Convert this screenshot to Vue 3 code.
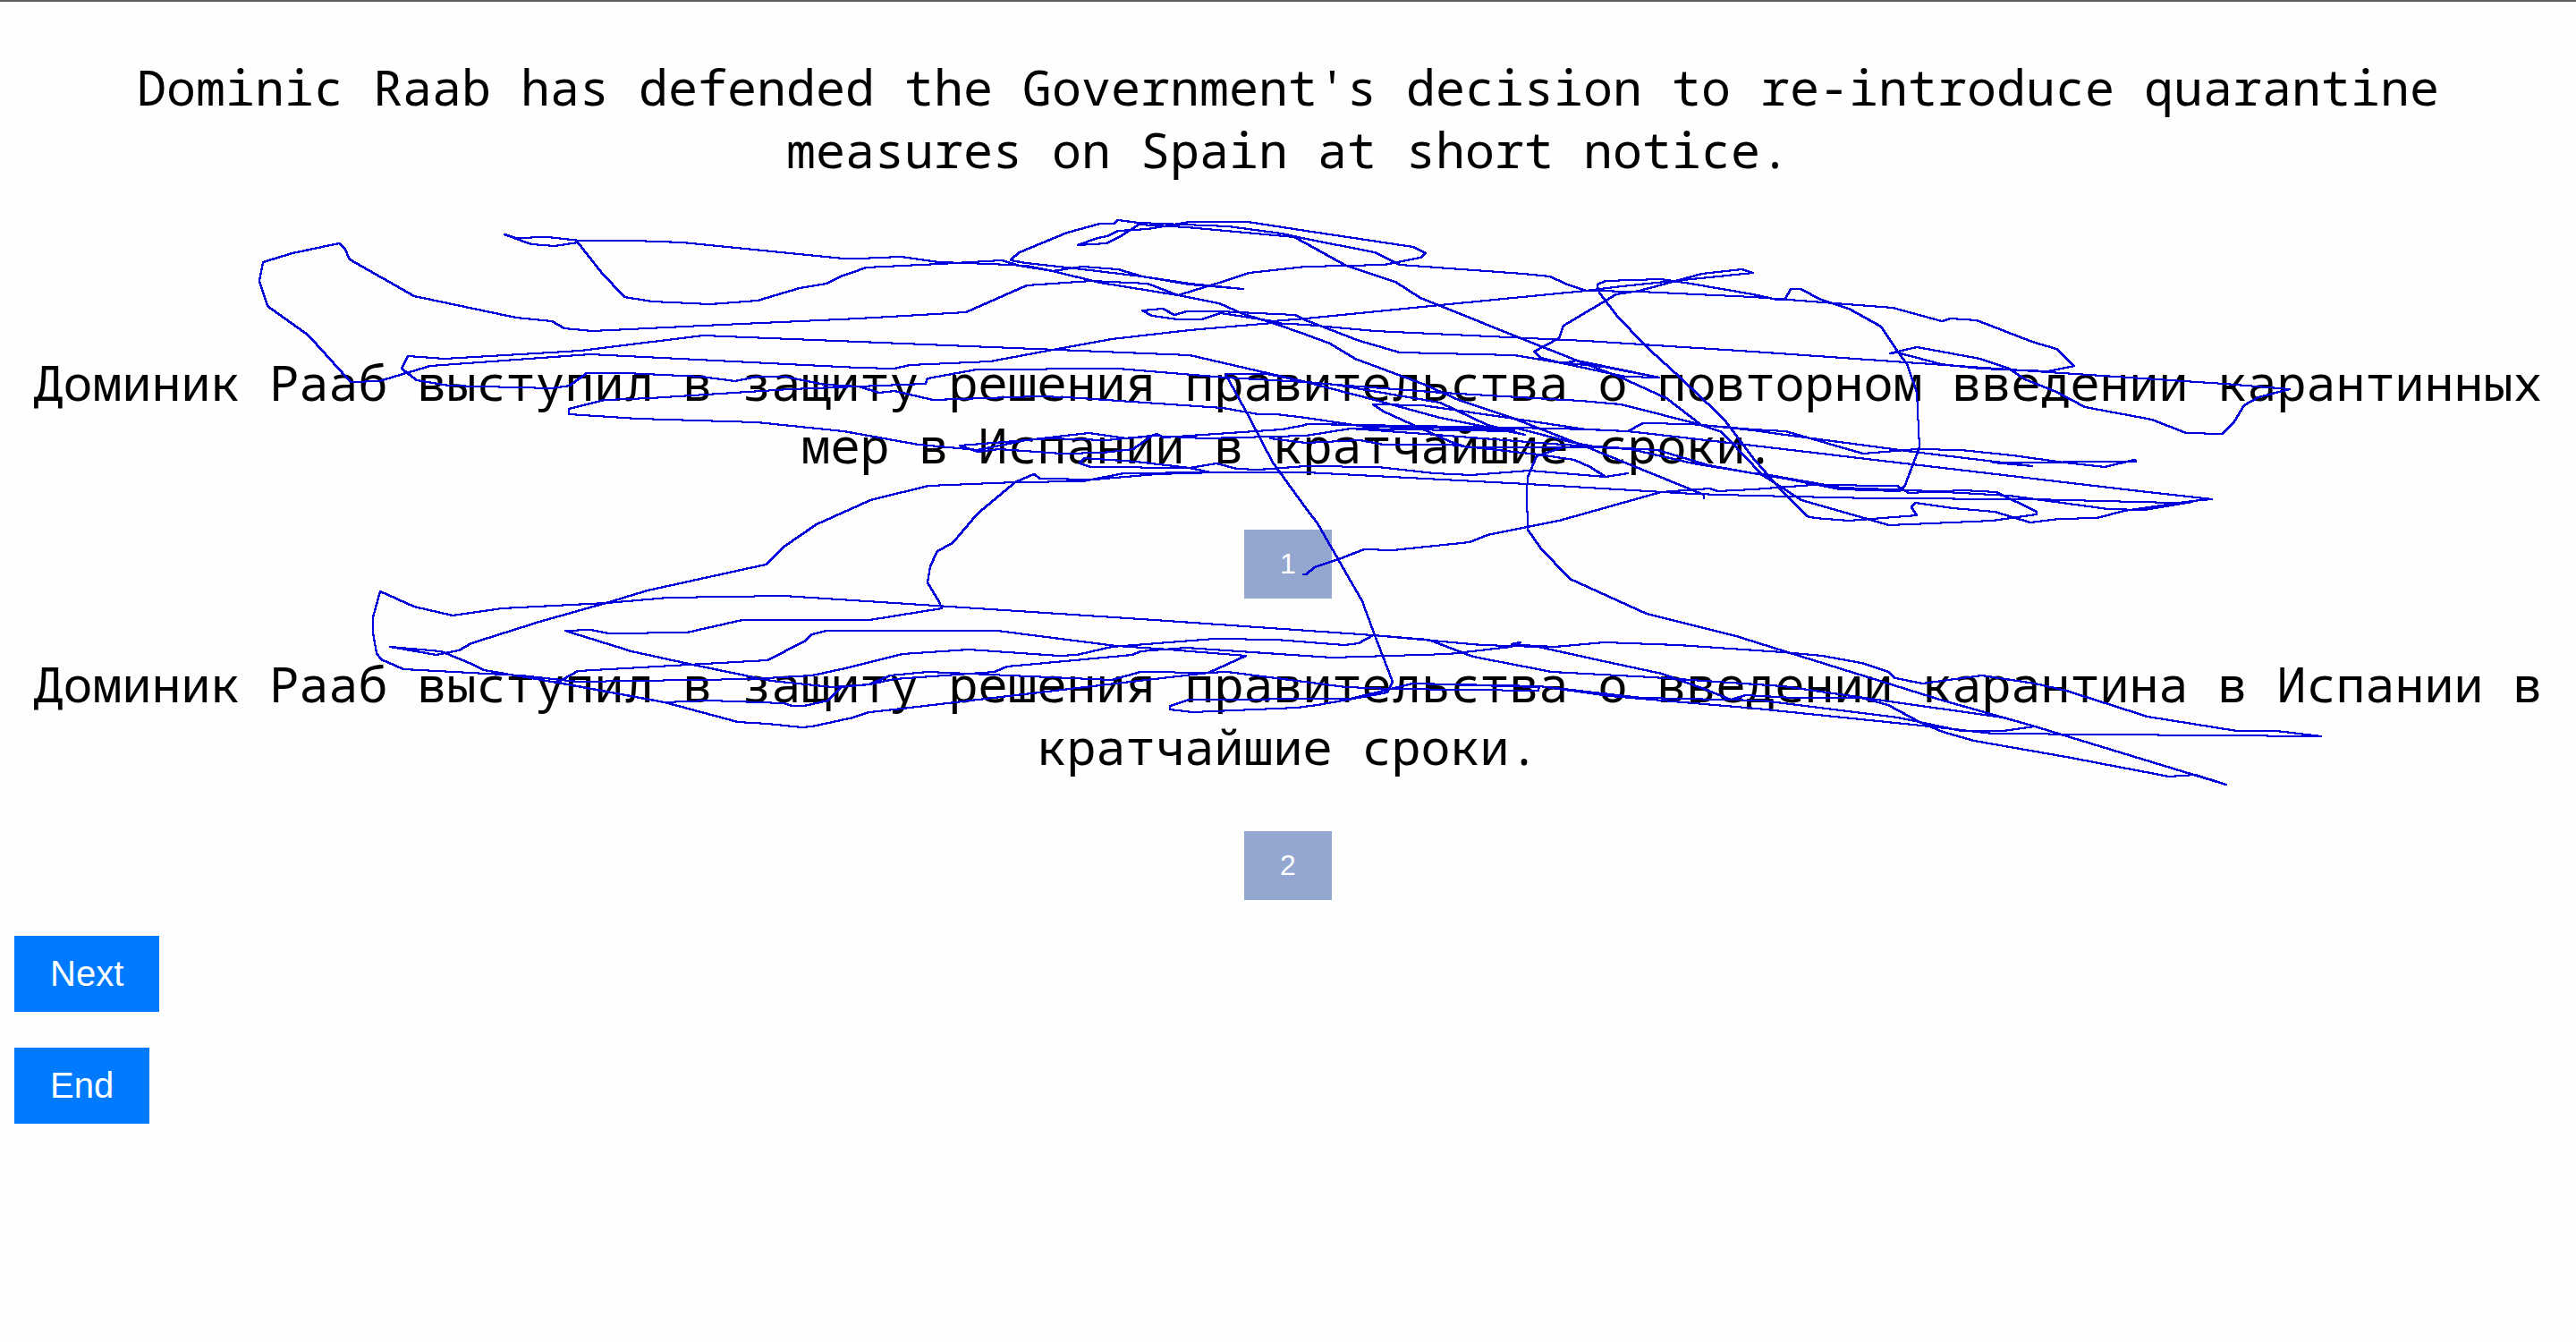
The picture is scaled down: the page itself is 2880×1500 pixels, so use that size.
<script setup>
const source = "Dominic Raab has defended the Government's decision to re-introduce quarantine measures on Spain at short notice."

const options = [
  { id: 1, text: 'Доминик Рааб выступил в защиту решения правительства о повторном введении карантинных мер в Испании в кратчайшие сроки.' },
  { id: 2, text: 'Доминик Рааб выступил в защиту решения правительства о введении карантина в Испании в кратчайшие сроки.' },
]

// Recorded gaze strokes, in page pixels
const strokes = [
  '1460,272 1505,297 1560,315 1588,333 1608,341 1700,378 1763,403 1810,421 1863,445 1902,475 1925,483 1960,520 1969,530 2014,559 2112,587 2228,582 2277,575 2277,572 2232,550 2194,548 2134,551 2121,543 2027,542 1960,547 1920,549 1912,546 1857,550 1743,582 1663,598 1643,606 1557,615 1525,614 1497,625 1470,634 1460,642 1457,642',
  '564,262 577,266 612,265 649,269 708,269 763,271 943,289 960,289 1007,287 1050,293 1107,295 1147,297 1177,303 1210,298 1250,301 1277,309 1330,318 1390,323 1330,317 1277,309 1210,301 1147,294 1130,291 1130,290 1140,282 1193,260 1230,250 1245,250 1250,246 1273,249 1373,253 1433,261 1460,267 1537,282 1565,296 1703,306 1733,309 1750,317 1773,325 1833,326 1960,332 2116,344 2171,359 2181,356 2210,358 2272,382 2299,390 2319,409 2290,415 2214,412 2170,407 2121,394 2113,395 2143,388 2214,401 2246,412 2264,424 2299,438 2331,455 2406,469 2444,484 2485,485 2498,471 2509,453 2525,444 2560,435 2487,429 2290,416 2174,408 1960,393 1773,381 1537,370 1460,363 1423,361 1330,369 1243,379 1177,391 1107,404 1017,408 1000,412 960,411 660,396 481,409 424,426 392,427 345,375 299,342 290,314 294,293 327,283 379,272 385,277 391,290 463,331 577,355 617,359 631,367 662,370 786,364 960,356 1080,349 1148,319 1220,314 1283,317 1317,330 1360,317 1397,305 1460,298 1548,296 1588,288 1594,283 1580,276 1460,258 1395,248 1330,248 1283,256 1250,258 1238,264 1227,266 1205,274 1237,272 1253,264 1273,251 1327,254 1447,265 1460,272',
  '564,262 594,273 620,275 646,271 672,304 698,332 729,337 794,340 847,336 894,322 924,317 940,309 960,302 968,299 1050,295 1120,291 1140,297 1177,303 1230,316 1317,330 1363,339 1390,351 1423,361 1460,374 1487,384 1515,401 1593,430 1633,448 1693,468 1770,498 1905,553 1905,557',
  '1460,358 1448,352 1363,348 1327,348 1313,352 1300,345 1277,347 1288,353 1317,357 1343,357 1365,350 1423,359 1460,356 1610,341 1773,325 1813,320 1960,305 1947,301 1903,306 1833,325 1807,329 1748,364 1743,378 1715,393 1723,400 1743,405 1793,410 1855,422 1817,421 1747,406 1693,397 1565,394 1520,381 1460,358',
  '1723,400 1747,406 1763,403 1855,422',
  '1787,325 1786,318 1795,314 1857,312 1890,317 1960,329 1987,335 1996,334 2002,323 2013,323 2036,335 2067,345 2103,365 2121,392 2132,407 2143,438 2146,500 2130,542 2123,549 2058,547 1996,535 1960,529 1893,518 1823,502 1787,500 1640,500 1620,493 1547,460 1535,452 1590,453 1693,468 1773,480 1820,482 1837,473 1890,474 1960,480 1996,482 2083,507 2143,502 2192,503 2250,509 2308,517 2353,522 2386,514 2388,516 2228,517 2272,521 2139,505 1996,486 1960,481 1903,475 1812,452 1767,448 1613,439 1493,430 1460,427 1330,397 960,382 786,375 649,392 497,401 456,398 449,412 466,425 502,431 538,432 617,434 637,431 656,417 699,417 784,421 822,426 846,421 878,421 922,430 960,432 983,439 1000,437 1043,447 1160,443 1193,444 1367,456 1407,463 1427,463 1460,467 1527,477 1693,480',
  '1788,327 1807,352 1840,387 1873,417 1927,468 1960,512 1987,543 2020,577 2029,579 2067,582 2143,576 2137,567 2141,562 2183,568 2230,572 2270,584 2302,580 2344,579 2375,571 2451,560 2473,558 2384,548 2121,517 1960,498 1820,482 1777,480 1693,478 1460,474',
  '1460,474 1527,475 1693,482 1510,479 1460,487 1347,490 1288,487 1237,492 1173,490 1073,498 1093,505 1117,502 1187,507 1233,506 1267,502 1288,487 1293,485 1301,489 1433,480 1460,475',
  '960,432 883,435 727,445 676,447 636,457 636,463 713,468 846,472 943,482 960,485 1027,497 1093,503 1147,492 1217,484 1260,490 1293,487',
  '960,432 1035,429 1037,423 1092,413 1250,412 1370,422 1460,427 1493,430 1610,450 1663,475 1705,486 1660,477 1610,467 1537,447 1460,427 1417,418 1370,418 1397,467 1423,517 1460,568 1473,585 1523,672 1537,710 1557,762 1551,774 1541,776 1473,788 1450,791 1333,796 1308,793 1308,789 1330,782 1510,781 1551,771 1579,764 1720,768',
  '1510,479 1593,485 1747,497 1853,503 1910,520 1960,529 1978,531 2058,545 2139,548 2246,554 2357,569 2397,570 2451,561 2429,562 2272,558 2094,557 1960,554 1893,552 1707,541 1460,528 1360,528 1293,530 1223,536 1163,535 1156,530 1135,539 1093,574 1065,607 1048,616 1040,633 1037,651 1049,671 1053,680 972,693 830,693 768,707 681,708 660,704 632,705 706,728 770,742 862,761 931,768 972,765 1000,759 1112,751 1126,745 1266,732 1275,728 1326,724 1489,735 1620,731 1689,723 1700,718 1690,720 1700,721 1738,723 1794,718 1876,721 1993,729 2037,733 2081,741 2111,751 2119,758 2149,764 2216,755 2275,764 2310,772 2401,801 2501,817 2545,817 2595,823 2228,820 2158,812 1964,792 1800,778 1721,767 1720,772 1556,770 1505,768 1372,751 1351,752 1275,751 1243,760 1083,753 1037,751 995,755 972,765 940,768 926,783 899,789 885,789 876,786 793,783 743,785 619,762',
  '1693,478 1760,495 1787,500',
  '1420,490 1460,495 1520,492 1547,497 1620,497 1720,508 1760,514 1778,522 1795,533 1820,529 1795,533 1710,526 1645,531 1603,529 1540,522 1460,521 1407,525 1383,524 1360,518 1330,523 1220,522 1207,518 1212,512 1270,516 1330,523 1353,528 1257,529 1210,538 1135,539 1038,543 973,559 960,565 913,586 878,610 856,631 724,660 681,673 603,695 527,719 513,727 488,732 436,723 493,728 527,742 541,749 623,763 743,785 825,807 858,809 897,813 908,812 954,802 972,796 1000,793 1230,766 1351,752 1393,733 1294,725 1248,722 1115,705 1000,705 924,705 908,709 899,717 858,738 646,750 623,763',
  '1747,500 1718,510 1708,533 1707,550 1708,592 1722,612 1755,647 1841,686 1941,711 2005,731 2169,782 2275,812 2469,871 2489,877 2454,866 2425,868 2310,846 2207,828 2172,818 2146,807 2111,788 2081,780 2005,780 1952,777 1935,782 1905,770 1858,753 1788,738 1720,723 1657,721 1535,710 1276,692 1000,674 876,666 747,668 678,674 561,680 506,688 463,678 425,661 417,690 417,707 421,730 426,737 451,748 582,755 646,762 839,759 908,755 945,747 1009,731 1083,726 1184,733 1204,732 1243,723 1358,714 1427,715 1503,721 1519,719 1535,710 1597,715 1647,734 1735,751 1847,757 1993,767 2105,783 2240,802 2275,812 2240,817 2193,817 2146,807 2122,802 1970,783 1835,780 1721,767 1579,764',
]

// A square pen tip: diagonal runs come out thicker than level or upright ones
const PEN = 2
const segments = strokes.flatMap((stroke) => {
  const points = stroke.split(' ').map((pair) => pair.split(',').map(Number))
  return points.slice(1).map(([x2, y2], i) => {
    const [x1, y1] = points[i]
    const dx = Math.abs(x2 - x1)
    const dy = Math.abs(y2 - y1)
    return { x1, y1, x2, y2, width: (PEN * (dx + dy)) / Math.hypot(dx, dy) }
  })
})
</script>

<template>
  <main class="page">
    <p class="sentence source">{{ source }}</p>
    <section v-for="option in options" :key="option.id" class="option">
      <p class="sentence">{{ option.text }}</p>
      <button type="button" class="choice">{{ option.id }}</button>
    </section>
    <nav class="actions">
      <button type="button" class="action">Next</button>
      <button type="button" class="action">End</button>
    </nav>
    <svg class="trace" viewBox="0 0 2880 1500" aria-hidden="true">
      <line
        v-for="(s, i) in segments"
        :key="i"
        :x1="s.x1"
        :y1="s.y1"
        :x2="s.x2"
        :y2="s.y2"
        :stroke-width="s.width"
      />
    </svg>
  </main>
</template>

<style>
body {
  background: #fefefe;
}
</style>

<style scoped>
.page {
  position: relative;
  border-top: 2px solid #605e5e;
  padding: 0 16px 40px;
}
.sentence {
  margin: 60px 0;
  font-family: "Noto Sans Mono", "DejaVu Sans Mono", monospace;
  font-size: 55px;
  line-height: 70px;
  text-align: center;
  color: #000;
}
.source {
  margin-bottom: 190px;
}
.option {
  display: flex;
  flex-direction: column;
  align-items: center;
}
.option .sentence {
  margin-top: 0;
}
.choice,
.action {
  border: 0;
  padding: 20px 40px;
  font-family: "Liberation Sans", Arial, sans-serif;
  color: #fff;
}
.choice {
  margin-bottom: 60px;
  background: #93a7d0;
  font-size: 32px;
  line-height: 37px;
}
.option:last-of-type .choice {
  margin-bottom: 40px;
}
.actions {
  display: flex;
  flex-direction: column;
  align-items: flex-start;
  gap: 40px;
}
.action {
  background: #007bff;
  font-size: 40px;
  line-height: 45px;
}
.trace {
  position: absolute;
  top: -2px;
  left: 0;
  width: 100%;
  pointer-events: none;
  stroke: #0000dc;
  stroke-linecap: round;
  shape-rendering: crispEdges;
}
</style>
